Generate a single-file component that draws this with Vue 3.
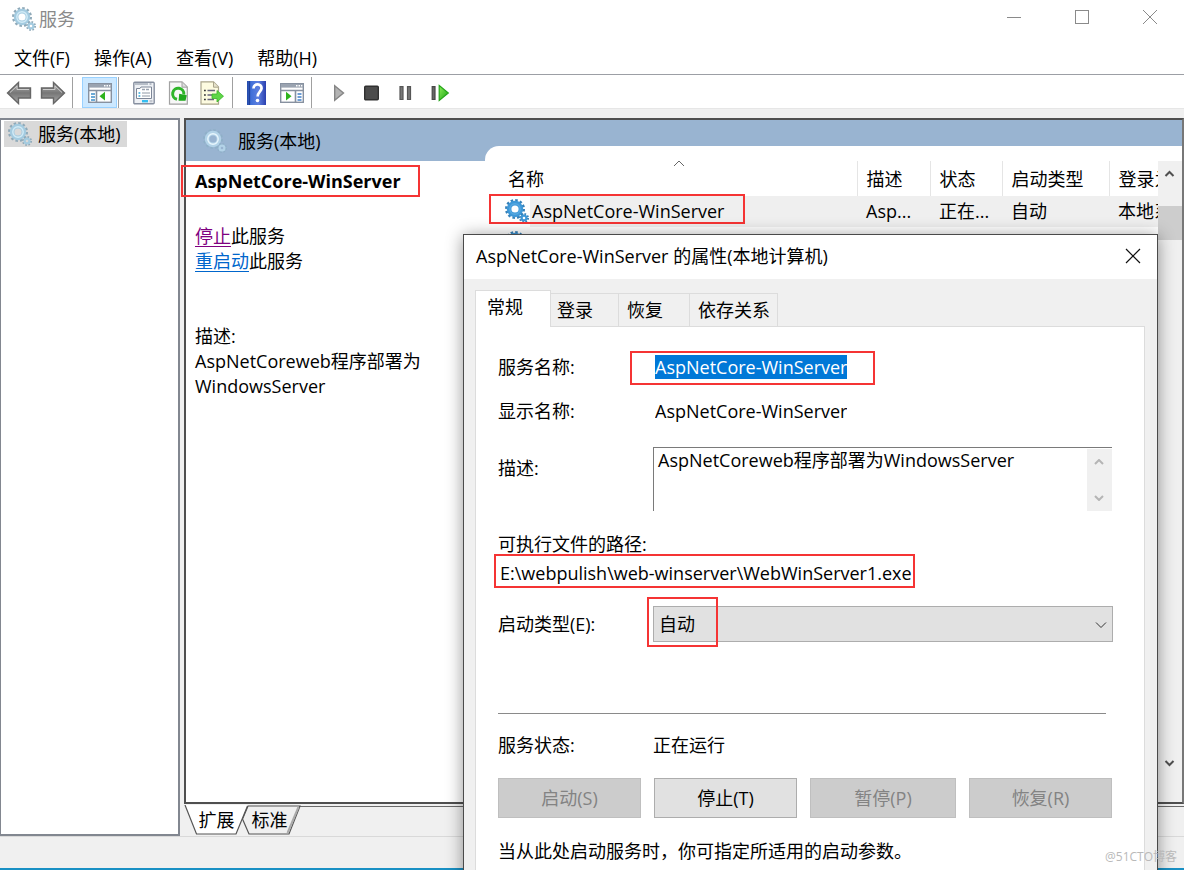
<script setup>
import { h, ref } from 'vue'

const menus = ['文件(F)', '操作(A)', '查看(V)', '帮助(H)']
const columns = ['名称', '描述', '状态', '启动类型', '登录为']
const tabs = ['登录', '恢复', '依存关系']
const serviceName = 'AspNetCore-WinServer'
const description = 'AspNetCoreweb程序部署为WindowsServer'
const startType = ref('自动')

const Gears = (props) =>
  h('svg', { class: ['gears', props.tone], viewBox: '0 0 24 24', width: 24, height: 24, 'aria-hidden': 'true' }, [
    h('circle', { class: 'teeth', cx: 10, cy: 10, r: 8.7, 'stroke-width': 2.6, 'stroke-dasharray': '2.5 2.05' }),
    h('circle', { class: 'body', cx: 10, cy: 10, r: 5.9, 'stroke-width': 4.6 }),
    h('circle', { class: 'shine', cx: 10, cy: 10, r: 5.2, 'stroke-width': 1.4 }),
    h('circle', { class: 'teeth', cx: 19, cy: 19, r: 4, 'stroke-width': 2, 'stroke-dasharray': '1.6 1.54' }),
    h('circle', { class: 'body', cx: 19, cy: 19, r: 2.4, 'stroke-width': 2.2 }),
  ])
Gears.props = ['tone']
</script>

<template>
  <div class="window">
    <header class="titlebar">
      <Gears tone="light" />
      <span class="app-name">服务</span>
      <div class="controls">
        <button aria-label="最小化"><svg width="16" height="16" viewBox="0 0 16 16"><path d="M1 8.5H15" /></svg></button>
        <button aria-label="最大化"><svg width="16" height="16" viewBox="0 0 16 16"><rect x="1.5" y="1.5" width="13" height="13" /></svg></button>
        <button aria-label="关闭"><svg width="16" height="16" viewBox="0 0 16 16"><path d="M1 1L15 15M15 1L1 15" /></svg></button>
      </div>
    </header>

    <nav class="menubar">
      <button v-for="m in menus" :key="m">{{ m }}</button>
    </nav>

    <div class="toolbar">
      <svg width="0" height="0" class="defs" aria-hidden="true">
        <defs>
          <linearGradient id="metal" x1="0" y1="0" x2="0" y2="1"><stop offset="0" stop-color="#b4b4b4" /><stop offset=".5" stop-color="#777" /><stop offset="1" stop-color="#a8a8a8" /></linearGradient>
          <linearGradient id="royal" x1="0" y1="0" x2="1" y2="0"><stop offset="0" stop-color="#2348a8" /><stop offset=".2" stop-color="#3f6fd8" /><stop offset=".6" stop-color="#5d7fe0" /><stop offset="1" stop-color="#2a3fae" /></linearGradient>
          <linearGradient id="leaf" x1="0" y1="0" x2="1" y2="1"><stop offset="0" stop-color="#8cf05a" /><stop offset="1" stop-color="#18a010" /></linearGradient>
        </defs>
      </svg>
      <div class="group g-nav">
        <button aria-label="后退"><svg width="26" height="24" viewBox="0 0 26 24"><path d="M1.5 12L12.5 1.5V7H24.5V17H12.5V22.5Z" fill="url(#metal)" stroke="#666" stroke-width="1.4" /><path d="M4 11.5L11 5V8.5H23" fill="none" stroke="#ccc" /></svg></button>
        <button aria-label="前进"><svg width="26" height="24" viewBox="0 0 26 24"><path d="M24.5 12L13.5 1.5V7H1.5V17H13.5V22.5Z" fill="url(#metal)" stroke="#666" stroke-width="1.4" /><path d="M3 8.5H15V5L22 11.5" fill="none" stroke="#ccc" /></svg></button>
      </div>
      <div class="group g-tree">
        <button class="pressed" aria-label="显示/隐藏控制台树">
          <svg width="24" height="22" viewBox="0 0 24 22"><rect x=".7" y="1.7" width="22.6" height="18.6" fill="#fff" stroke="#8791a0" stroke-width="1.4" /><rect x="1" y="2" width="22" height="3.6" fill="#9aa3b0" /><path d="M16 3.7h1.5M18.5 3.7H20M21 3.7h1.3" stroke="#fff" stroke-width="1.5" /><path d="M1 8.5H23M8.5 9V20" stroke="#8791a0" stroke-width="1.6" /><path d="M3 12h4M3 15h4M3 18h4" stroke="#3f8fc9" stroke-width="1.6" /><path d="M17 9.8V18.6L11.5 14.2Z" fill="#2fb41c" /></svg>
        </button>
      </div>
      <div class="group g-edit">
        <button aria-label="属性"><svg width="24" height="24" viewBox="0 0 24 24"><rect x="1.8" y="1.3" width="20.4" height="21.4" rx="1" fill="#eef1f5" stroke="#8790a0" stroke-width="1.4" /><path d="M3 3H21" stroke="#a5adb9" stroke-width="1.6" stroke-dasharray="13 1.5 2 1.5" /><path d="M4.5 7.5H8L9 6H19.5V17.5H4.5Z" fill="#fff" stroke="#7d8697" /><path d="M10 8.5H18" stroke="#9aa3b0" stroke-width="1.4" stroke-dasharray="3 1" /><path d="M6.5 12h1.8M6.5 15h1.8" stroke="#2fa5d8" stroke-width="1.6" /><path d="M10 12h8M10 15h8" stroke="#9099a6" stroke-width="1.2" /><rect x="10" y="19" width="6" height="2.4" fill="#35bdf0" /><rect x="17.5" y="19" width="3" height="2.4" fill="#c3c8d0" /></svg></button>
        <button aria-label="刷新"><svg width="24" height="24" viewBox="0 0 24 24"><path d="M3.5 .8H16L21.3 6V23.2H3.5Z" fill="#f7f7f7" stroke="#a2a2a2" stroke-width="1.2" /><path d="M16 1V6.2H21" fill="#ddd" stroke="#a2a2a2" /><path d="M11 18.3A5.6 5.6 0 1 1 17.8 13.5" fill="none" stroke="#2fb52a" stroke-width="3" /><path d="M13.2 12.8L20.8 14.2L19.5 19.8H12.6Z" fill="#21a81e" /></svg></button>
        <button aria-label="导出列表"><svg width="24" height="24" viewBox="0 0 24 24"><path d="M1 .8H13.5L18.5 6V23.2H1Z" fill="#fdfbe0" stroke="#aaa58c" stroke-width="1.2" /><path d="M13.5 1V6.2H18.5" fill="#e5e2cb" stroke="#aaa58c" /><path d="M4 9.5h1.8M4 14h1.8M4 18.5h1.8" stroke="#333" stroke-width="1.6" /><path d="M7.5 9.5H15M7.5 14H13M7.5 18.5H14" stroke="#66647c" stroke-width="1.4" /><path d="M12 13H17V9.5L23.5 15.2L17 21V17.5H12Z" fill="#5fd647" stroke="#38b42a" stroke-width=".8" /></svg></button>
      </div>
      <div class="group g-help">
        <button aria-label="帮助"><svg width="24" height="24" viewBox="0 0 24 24"><rect x="2" y="0" width="19" height="24" fill="url(#royal)" /><path d="M4.5 0V24" stroke="#1f3f99" stroke-width="1.2" /><path d="M8.5 7.5C8.7 1.8 17 2.2 16.5 7.5C16.2 10.5 12.7 11 12.7 15.5" fill="none" stroke="#fff" stroke-width="2.7" /><circle cx="12.5" cy="19.5" r="1.8" fill="#fff" /></svg></button>
        <button aria-label="显示/隐藏操作窗格"><svg width="24" height="22" viewBox="0 0 24 22"><rect x=".7" y="1.7" width="22.6" height="18.6" fill="#fff" stroke="#8791a0" stroke-width="1.4" /><rect x="1" y="2" width="22" height="3.6" fill="#9aa3b0" /><path d="M16 3.7h1.5M18.5 3.7H20M21 3.7h1.3" stroke="#fff" stroke-width="1.5" /><path d="M1 8.5H23M15.5 9V20" stroke="#8791a0" stroke-width="1.6" /><path d="M17.5 12h4M17.5 15h4M17.5 18h4" stroke="#3f7fc9" stroke-width="1.6" /><path d="M6 9.8V18.6L11.5 14.2Z" fill="#2fb41c" /></svg></button>
      </div>
      <div class="group g-run">
        <button aria-label="启动服务"><svg width="24" height="24" viewBox="0 0 24 24"><path d="M8.7 4.7L17.5 12L8.7 19.3Z" fill="#b3b3b3" stroke="#858585" stroke-width="1.4" /></svg></button>
        <button aria-label="停止服务"><svg width="24" height="24" viewBox="0 0 24 24"><rect x="4.7" y="5.2" width="13.6" height="13.6" rx="1" fill="#4c4c4c" stroke="#303030" stroke-width="1.4" /></svg></button>
        <button aria-label="暂停服务"><svg width="24" height="24" viewBox="0 0 24 24"><path d="M6 5.7H9V18.5H6ZM13.5 5.7H16.5V18.5H13.5Z" fill="#777" stroke="#565656" stroke-width="1.2" /></svg></button>
        <button aria-label="重启动服务"><svg width="24" height="24" viewBox="0 0 24 24"><path d="M4.2 5.7H7V18.5H4.2Z" fill="#666" stroke="#484848" stroke-width="1.2" /><path d="M11.2 4.5L20.3 12L11.2 19.5Z" fill="url(#leaf)" stroke="#25a51a" stroke-width="1.2" /></svg></button>
      </div>
    </div>

    <main class="workspace">
      <aside class="tree">
        <button class="tree-node"><Gears tone="light" />服务(本地)</button>
      </aside>

      <section class="right-side">
        <div class="pane">
          <div class="details">
            <div class="details-head"><Gears tone="faint" />服务(本地)</div>
            <div class="details-body">
              <h2>{{ serviceName }}<i class="mark m-heading"></i></h2>
              <p><a href="#" class="visited">停止</a>此服务<br /><a href="#">重启动</a>此服务</p>
              <p class="about">描述:<br />AspNetCoreweb程序部署为WindowsServer</p>
            </div>
          </div>
          <div class="list">
            <div class="list-body">
              <table>
                <colgroup><col /><col class="c-desc" /><col class="c-state" /><col class="c-type" /><col class="c-logon" /></colgroup>
                <thead>
                  <tr><th v-for="c in columns" :key="c">{{ c }}</th></tr>
                </thead>
                <tbody>
                  <tr class="selected">
                    <td class="name"><Gears tone="blue" /><span>{{ serviceName }}</span><i class="mark m-row"></i></td>
                    <td>Asp...</td><td>正在...</td><td>自动</td><td>本地系统</td>
                  </tr>
                  <tr><td class="name"><Gears tone="blue" /></td><td></td><td></td><td></td><td></td></tr>
                </tbody>
              </table>
              <div class="scroll">
                <svg width="24" height="24" viewBox="0 0 24 24"><path d="M7.5 15L11.5 11L15.5 15" /></svg>
                <div class="thumb"></div>
                <svg width="24" height="24" viewBox="0 0 24 24" class="down"><path d="M7.5 9L11.5 13L15.5 9" /></svg>
              </div>
            </div>
            <svg class="sort" width="12" height="7" viewBox="0 0 12 7"><path d="M1 6L6 1L11 6" /></svg>
          </div>
        </div>
        <div class="sheet-tabs">
          <svg width="120" height="31" viewBox="0 0 120 31" aria-hidden="true">
            <path d="M64 1H116L105 29H65L58.5 14Z" fill="#f0f0f0" stroke="#555" stroke-width="1.2" />
            <path d="M114.5 2L103.5 28" stroke="#aaa" stroke-width="2" />
            <path d="M1 0L12.5 29H52L63.5 0Z" fill="#fff" />
            <path d="M1 0L12.5 29H52L63.5 1" fill="none" stroke="#555" stroke-width="1.2" />
          </svg>
          <button>扩展</button><button>标准</button>
        </div>
      </section>
    </main>
    <footer class="statusbar"></footer>

    <section class="dialog" role="dialog" aria-labelledby="dlg-title">
      <header class="dialog-title">
        <span id="dlg-title">AspNetCore-WinServer 的属性(本地计算机)</span>
        <button aria-label="关闭"><svg width="16" height="16" viewBox="0 0 16 16"><path d="M1 1L15 15M15 1L1 15" /></svg></button>
      </header>
      <div class="tabs">
        <button class="active">常规</button>
        <button v-for="t in tabs" :key="t">{{ t }}</button>
      </div>
      <form class="panel" @submit.prevent>
        <div class="field">
          <label for="svc">服务名称:</label>
          <div class="value"><input id="svc" class="highlight" :value="serviceName" readonly /><i class="mark m-svc"></i></div>
        </div>
        <div class="field">
          <label for="disp">显示名称:</label>
          <div class="value"><input id="disp" :value="serviceName" readonly /></div>
        </div>
        <div class="field desc-field">
          <label for="desc">描述:</label>
          <div class="memo">
            <textarea id="desc" readonly :value="description"></textarea>
            <div class="memo-scroll">
              <svg width="10" height="6" viewBox="0 0 10 6"><path d="M1 5L5 1L9 5" /></svg>
              <svg width="10" height="6" viewBox="0 0 10 6"><path d="M1 1L5 5L9 1" /></svg>
            </div>
          </div>
        </div>
        <div class="path">
          <label for="path">可执行文件的路径:</label>
          <input id="path" value="E:\webpulish\web-winserver\WebWinServer1.exe" readonly />
          <i class="mark m-path"></i>
        </div>
        <div class="field">
          <label for="type">启动类型(E):</label>
          <div class="combo">
            <select id="type" v-model="startType"><option>自动</option></select>
            <svg width="12" height="8" viewBox="0 0 12 8"><path d="M1 1.5L6 6.5L11 1.5" /></svg>
            <i class="mark m-type"></i>
          </div>
        </div>
        <hr />
        <div class="field state"><span>服务状态:</span><span>正在运行</span></div>
        <div class="actions">
          <button type="button" disabled>启动(S)</button>
          <button type="button">停止(T)</button>
          <button type="button" disabled>暂停(P)</button>
          <button type="button" disabled>恢复(R)</button>
        </div>
        <p class="hint">当从此处启动服务时，你可指定所适用的启动参数。</p>
      </form>
    </section>
    <span class="watermark">@51CTO博客</span>
  </div>
</template>

<style>
body {
  background: #f0f0f0;
}
</style>

<style scoped>
* {
  box-sizing: border-box;
}
.window {
  position: relative;
  display: flex;
  flex-direction: column;
  height: 100vh;
  overflow: hidden;
  background: #f0f0f0;
  color: #000;
  font: 18px/24px "Open Sans", "Noto Sans CJK SC", sans-serif;
}
button,
input,
select,
textarea {
  font: inherit;
  color: inherit;
  margin: 0;
  padding: 0;
  border: 0;
  border-radius: 0;
  background: none;
  outline: 0;
}
svg {
  display: block;
  flex: none;
}
.gears :deep(circle) {
  fill: none;
}
.light { --teeth: #8fa9b8; --body: #a4cbe0; --shine: #d2ebf7; }
.faint { --teeth: #8fb0c8; --body: #b3d3e8; --shine: #e8f6fd; }
.blue { --teeth: #3580b8; --body: #3e98d8; --shine: #56a8e0; }
.gears :deep(.teeth) { stroke: var(--teeth); }
.gears :deep(.body) { stroke: var(--body); }
.gears :deep(.shine) { stroke: var(--shine); }

.mark {
  position: absolute;
  border: 2px solid #f53434;
  pointer-events: none;
}

.titlebar {
  display: flex;
  align-items: center;
  height: 38px;
  padding-left: 12px;
  background: #fff;
  color: #8a8a8a;
}
.app-name {
  padding-left: 3px;
}
.controls {
  display: flex;
  margin-left: auto;
  height: 34px;
  align-self: flex-start;
}
.controls button {
  display: grid;
  place-items: center;
  width: 68px;
}
.controls svg {
  fill: none;
  stroke: #8a8a8a;
}
.menubar {
  display: flex;
  gap: 24px;
  height: 37px;
  padding: 0 14px;
  background: #fff;
  border-bottom: 1px solid #9c9fa5;
}
.menubar button {
  padding-top: 4px;
}
.toolbar {
  display: flex;
  height: 34px;
  padding: 2px 0 0;
  background: #fff;
  border-bottom: 1px solid #e6e6e6;
}
.defs {
  position: absolute;
}
.group {
  display: flex;
  align-items: center;
  gap: 10px;
  border-right: 1px solid #a0a0a0;
}
.group button {
  display: grid;
  place-items: center;
}
.g-nav { gap: 8px; padding: 0 6px; }
.g-tree { padding: 0 1px 0 9px; }
.g-edit { padding: 0 8px 0 13px; }
.g-help { gap: 11px; padding: 0 7px 0 12px; }
.g-run { padding: 0 14px; border: 0; }
.group .pressed {
  width: 35px;
  height: 31px;
  background: #cce8ff;
  border: 1px solid #99d1ff;
}

.workspace {
  display: flex;
  flex: 1;
  gap: 4px;
  min-height: 0;
  padding-top: 9px;
  border-bottom: 1px solid #d9d9d9;
}
.tree {
  width: 180px;
  padding: 1px 3px;
  background: #fff;
  border: 2px solid #828790;
  border-left-width: 1px;
}
.tree-node {
  display: flex;
  align-items: center;
  gap: 6px;
  height: 26px;
  padding: 0 6px 0 4px;
  background: #d9d9d9;
}
.right-side {
  display: flex;
  flex: 1;
  flex-direction: column;
  min-width: 0;
}
.pane {
  display: flex;
  flex: 1;
  min-height: 0;
  background: #99b4d1;
  border: 2px solid #4f4f4f;
  border-right-color: #777;
}
.details {
  display: flex;
  flex-direction: column;
  width: 299px;
}
.details-head {
  display: flex;
  align-items: center;
  gap: 11px;
  height: 41px;
  padding-left: 17px;
}
.details-body {
  flex: 1;
  padding: 8px 9px;
  background: #fff;
  line-height: 25px;
}
h2 {
  position: relative;
  margin: 0 0 30px;
  font-size: 18px;
  line-height: 25px;
}
.m-heading {
  top: -4px;
  left: -14px;
  width: 239px;
  height: 32px;
}
p {
  margin: 0;
}
a {
  color: #0066cc;
  text-underline-offset: 3px;
}
.visited {
  color: #800080;
}
.about {
  padding: 50px 50px 0 0;
  overflow-wrap: anywhere;
}
.list {
  position: relative;
  display: flex;
  flex: 1;
  flex-direction: column;
  min-width: 0;
  margin-top: 26px;
  padding-top: 15px;
  background: #fff;
  border-top-left-radius: 14px;
}
.sort {
  position: absolute;
  top: 14px;
  left: 188px;
  fill: none;
  stroke: #666;
}
.list-body {
  display: flex;
  flex: 1;
}
table {
  flex: 1;
  width: 0;
  height: 0;
  table-layout: fixed;
  border-collapse: collapse;
}
.c-desc { width: 73px; }
.c-state { width: 72px; }
.c-type { width: 107px; }
.c-logon { width: 49px; }
th,
td {
  padding: 0 0 0 9px;
  overflow: hidden;
  font-weight: 400;
  text-align: left;
  white-space: nowrap;
}
th {
  height: 35px;
  border-left: 1px solid #e5e5e5;
}
th:first-child {
  padding-left: 23px;
  border-left: 0;
}
td {
  height: 31px;
}
.selected td {
  padding-bottom: 1px;
  background: #efefef;
}
.selected td.name,
td.name {
  position: relative;
  padding: 0 0 0 20px;
  overflow: visible;
  background: none;
}
.name .gears {
  float: left;
}
.selected .name span {
  display: block;
  margin-left: 25px;
  padding-left: 2px;
  background: #efefef;
  line-height: 31px;
}
.selected .gears {
  margin-top: 3px;
}
.m-row {
  top: -2px;
  left: 4px;
  width: 256px;
  height: 30px;
}
.scroll {
  display: flex;
  flex-direction: column;
  width: 24px;
  padding-bottom: 26px;
  background: #f0f0f0;
}
.scroll svg {
  fill: none;
  stroke: #505050;
  stroke-width: 2;
}
.thumb {
  height: 34px;
  margin-top: 21px;
  background: #cdcdcd;
}
.scroll .down {
  margin-top: auto;
}
.sheet-tabs {
  position: relative;
  display: flex;
  height: 32px;
}
.sheet-tabs::before {
  content: "";
  position: absolute;
  inset: 2px 0 auto 64px;
  border-top: 1px solid #6a6a6a;
}
.sheet-tabs svg {
  position: absolute;
  top: 1px;
  left: 0;
}
.sheet-tabs button {
  position: relative;
  width: 53px;
  padding: 0 0 0 12px;
}
.statusbar {
  height: 33px;
  border-bottom: 2px solid #1990c4;
}

.dialog {
  position: absolute;
  top: 234px;
  right: 26px;
  left: 463px;
  background: #f0f0f0;
  border: 1px solid #4a4a4a;
  box-shadow: 0 2px 16px rgba(0, 0, 0, 0.42);
}
.dialog-title {
  display: flex;
  align-items: center;
  justify-content: space-between;
  height: 44px;
  padding: 0 16px 3px 12px;
  background: #fff;
}
.dialog-title svg {
  fill: none;
  stroke: #111;
  stroke-width: 1.2;
}
.tabs {
  display: flex;
  align-items: flex-end;
  height: 47px;
  padding-left: 11px;
}
.tabs button {
  height: 33px;
  width: 71px;
  padding: 0 8px;
  text-align: left;
  white-space: nowrap;
  border: 1px solid #dcdcdc;
  border-bottom: 0;
  border-left-width: 0;
}
.tabs button:nth-child(2) {
  width: 68px;
  padding-left: 6px;
}
.tabs button:last-child {
  width: 88px;
}
.tabs .active {
  position: relative;
  z-index: 1;
  width: 76px;
  height: 37px;
  margin-bottom: -1px;
  padding: 0 11px 4px;
  border-left-width: 1px;
  background: #fff;
}
.panel {
  margin: 0 12px 0 11px;
  padding: 24px 31px 24px 22px;
  background: #fff;
  border: 1px solid #dcdcdc;
}
.field {
  display: grid;
  grid-template-columns: 155px 1fr;
  align-items: center;
  min-height: 32px;
}
.field + .field {
  margin-top: 12px;
}
.value {
  position: relative;
  padding-left: 2px;
}
.value input {
  display: block;
  width: 192px;
  height: 24px;
}
.value .highlight {
  background: #0078d7;
  color: #fff;
}
.m-svc {
  top: -4px;
  left: -23px;
  width: 245px;
  height: 34px;
}
.panel .desc-field {
  margin-top: 20px;
}
.desc-field label {
  padding-bottom: 22px;
}
.memo {
  display: flex;
  height: 64px;
  margin-right: 1px;
  border-top: 1px solid #7a7a7a;
}
textarea {
  flex: 1;
  min-width: 0;
  height: 63px;
  padding: 0 4px;
  resize: none;
  overflow: hidden;
  border-left: 1px solid #7a7a7a;
}
.memo-scroll {
  display: flex;
  flex-direction: column;
  align-items: center;
  justify-content: space-between;
  width: 25px;
  margin-top: 1px;
  padding: 10px 2px 10px 0;
  background: #f0f0f0;
}
.memo-scroll svg {
  fill: none;
  stroke: #b5b5b5;
  stroke-width: 2;
}
.path {
  position: relative;
  display: flex;
  flex-direction: column;
  gap: 5px;
  padding: 21px 0;
}
.path input {
  padding-left: 2px;
}
.m-path {
  top: 43px;
  left: -4px;
  width: 421px;
  height: 34px;
}
.combo {
  position: relative;
}
.combo select {
  display: block;
  width: 100%;
  height: 36px;
  padding: 0 5px;
  appearance: none;
  background: #e1e1e1;
  border: 1px solid #adadad;
}
.combo svg {
  position: absolute;
  top: 15px;
  right: 6px;
  fill: none;
  stroke: #333;
}
.m-type {
  top: -9px;
  left: -6px;
  width: 71px;
  height: 50px;
}
hr {
  height: 1px;
  margin: 71px 7px 15px 0;
  border: 0;
  background: #8a8a8a;
}
.actions {
  display: grid;
  grid-template-columns: 143fr 143fr 146fr 143fr;
  gap: 13px;
  margin: 17px 1px 21px 0;
}
.actions button {
  height: 40px;
  border: 1px solid #adadad;
  background: #e1e1e1;
}
.actions button:disabled {
  color: #838383;
  background: #ccc;
  border-color: #bfbfbf;
}
.watermark {
  position: absolute;
  right: 7px;
  bottom: 5px;
  color: #b9b9b9;
  font-size: 12px;
  line-height: 16px;
}
</style>
